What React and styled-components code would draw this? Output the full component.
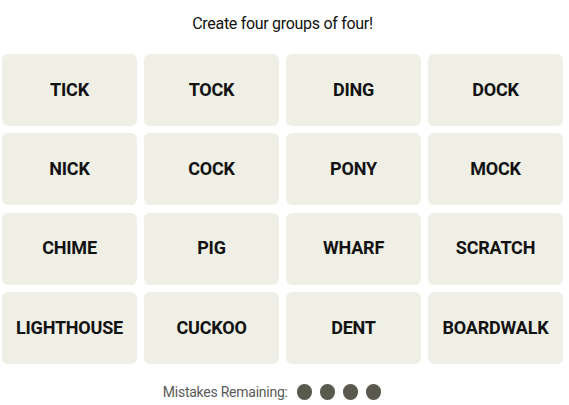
import React from 'react'
import styled, {createGlobalStyle} from 'styled-components'

const GlobalStyle = createGlobalStyle`
    html, body {
        margin: 0;
        padding: 0;
        background: #ffffff;
    }
    body {
        font-family: Roboto, "Liberation Sans", sans-serif;
    }
`

const words = [
    'TICK', 'TOCK', 'DING', 'DOCK',
    'NICK', 'COCK', 'PONY', 'MOCK',
    'CHIME', 'PIG', 'WHARF', 'SCRATCH',
    'LIGHTHOUSE', 'CUCKOO', 'DENT', 'BOARDWALK',
]

const Board = styled.main`
    width: 561px;
    margin-left: 2px;
    display: flex;
    flex-direction: column;
    align-items: center;
`

const Title = styled.p`
    margin: 14px 0 0;
    font-size: 16px;
    line-height: 20px;
    letter-spacing: -0.3px;
    color: #121212;
`

const Grid = styled.div`
    margin-top: 20px;
    width: 100%;
    display: grid;
    grid-template-columns: repeat(4, 1fr);
    grid-auto-rows: 72px;
    column-gap: 7px;
    row-gap: 7.4px;
`

const Tile = styled.button`
    border: none;
    border-radius: 6px;
    background: #efefe6;
    color: #121212;
    font-family: Roboto, "Liberation Sans", sans-serif;
    font-weight: 700;
    font-size: 18px;
    letter-spacing: -0.2px;
    text-transform: uppercase;
    display: flex;
    align-items: center;
    justify-content: center;
    padding: 0 0 2px;
    cursor: pointer;
`

const Mistakes = styled.div`
    margin-top: 20px;
    display: flex;
    align-items: center;
    gap: 9px;
    padding-right: 21px;
    color: #5a5a5a;
    font-size: 14px;
    letter-spacing: -0.25px;
`

const Dots = styled.span`
    display: flex;
    gap: 7.5px;
`

const Dot = styled.span`
    width: 15.5px;
    height: 15.5px;
    border-radius: 50%;
    background: ${p => p.$used ? '#e3e3da' : '#5a594e'};
`

export default function App() {
    const remaining = 4
    return (
        <Board>
            <GlobalStyle />
            <Title>Create four groups of four!</Title>
            <Grid>
                {words.map(w => <Tile key={w}>{w}</Tile>)}
            </Grid>
            <Mistakes>
                Mistakes Remaining:
                <Dots>
                    {[0, 1, 2, 3].map(i => <Dot key={i} $used={i >= remaining} />)}
                </Dots>
            </Mistakes>
        </Board>
    )
}
